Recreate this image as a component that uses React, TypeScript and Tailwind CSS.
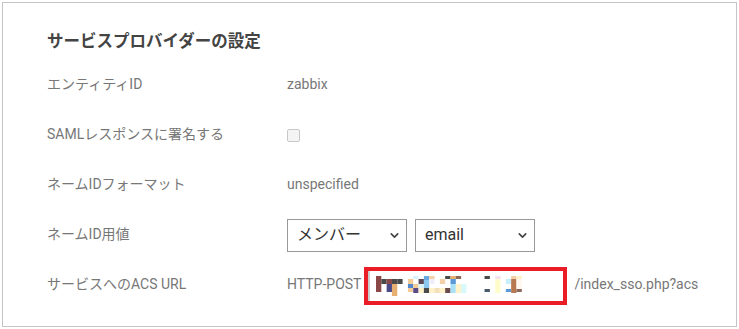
import { ChevronDown } from "lucide-react"

const font = { fontFamily: "Roboto, 'Noto Sans CJK JP', sans-serif" }

// pixelated (blurred) URL cells: [x, y, w, h, color]
const mosaic: [number, number, number, number, string][] = [
    [0, 0, 5, 16, "#8b4848"],
    [5, 3, 5, 5, "#4a4a4a"],
    [10, 3, 5, 5, "#8b4848"],
    [10, 8, 5, 8, "#4a4a88"],
    [15, 3, 5, 5, "#4a4a4a"],
    [15, 8, 5, 12, "#e8b070"],
    [20, 3, 5, 5, "#4a4a4a"],
    [30, 3, 5, 5, "#f4cc98"],
    [30, 8, 5, 4, "#5588cc"],
    [30, 12, 5, 4, "#f4cc98"],
    [35, 0, 5, 3, "#d8f4fa"],
    [35, 8, 5, 4, "#f4cc98"],
    [35, 12, 5, 5, "#5a4a88"],
    [40, 3, 5, 5, "#5a4a5a"],
    [40, 8, 5, 4, "#d8f4fa"],
    [40, 12, 5, 5, "#fff2c8"],
    [45, 0, 5, 4, "#6aa8e0"],
    [45, 4, 5, 8, "#8ac8f0"],
    [45, 12, 5, 5, "#4a4a4a"],
    [50, 0, 5, 3, "#f4d0a8"],
    [50, 3, 5, 5, "#f0eef8"],
    [50, 12, 5, 5, "#fff2c8"],
    [55, 12, 5, 5, "#f4e0b8"],
    [60, 3, 5, 5, "#f4d0a8"],
    [60, 12, 5, 5, "#fff2c8"],
    [65, 0, 5, 3, "#4a4a4a"],
    [65, 12, 5, 5, "#6a4a4a"],
    [70, 0, 5, 3, "#e8b070"],
    [70, 3, 5, 5, "#5a98d8"],
    [70, 8, 5, 9, "#a8e0f8"],
    [75, 0, 5, 3, "#8b6a5a"],
    [75, 8, 5, 9, "#fff2c8"],
    [80, 8, 5, 9, "#d8f8fa"],
    [102, 0, 5, 3, "#4a4a4a"],
    [102, 13, 5, 3, "#4a5a6a"],
    [112, 0, 5, 3, "#f4e0f0"],
    [112, 3, 5, 14, "#fffccc"],
    [122, 3, 5, 5, "#c8f0fa"],
    [122, 13, 5, 3, "#5a98d8"],
    [127, 0, 5, 3, "#f4d0a8"],
    [127, 3, 5, 14, "#b87850"],
    [132, 0, 5, 3, "#fff2c8"],
    [132, 3, 5, 10, "#fff8f0"],
    [132, 13, 5, 3, "#8b6a5a"],
]

function Row({ label, children }: { label: string; children: React.ReactNode }) {
    return (
        <div className="flex items-center h-[50px]">
            <div className="w-[240px] text-[14px] text-[#777]">{label}</div>
            <div className="flex items-center text-[14px] text-[#777]">{children}</div>
        </div>
    )
}

function Select({ value, options }: { value: string; options: string[] }) {
    return (
        <div className="relative w-[120px] h-[33px]">
            <select
                defaultValue={value}
                className="appearance-none w-full h-full border border-[#999] bg-white text-[16px] text-[#333] pl-[9px] outline-none"
                style={font}
            >
                {options.map((o) => (
                    <option key={o}>{o}</option>
                ))}
            </select>
            <ChevronDown
                size={13}
                strokeWidth={3}
                className="absolute right-[6px] top-[10px] text-[#444] pointer-events-none"
            />
        </div>
    )
}

export default function App() {
    return (
        <div className="bg-white w-[739px] h-[329px] p-[2px]" style={font}>
            <div className="border border-[#c4c4c4] h-full pl-[44px] pt-[27px]">
                <h2 className="text-[16.5px] font-bold text-[#444] leading-[24px] mb-[5px]">
                    サービスプロバイダーの設定
                </h2>

                <Row label="エンティティID">zabbix</Row>

                <Row label="SAMLレスポンスに署名する">
                    <span className="block w-[13px] h-[13px] mt-[2px] border border-[#c8c8c8] rounded-[2px] bg-[#f4f4f4]"></span>
                </Row>

                <Row label="ネームIDフォーマット">unspecified</Row>

                <Row label="ネームID用値">
                    <div className="flex gap-[8px] mt-[2px]">
                        <Select value="メンバー" options={["メンバー", "グループ"]} />
                        <Select value="email" options={["email", "name"]} />
                    </div>
                </Row>

                <Row label="サービスへのACS URL">
                    <span>HTTP-POST</span>
                    <div className="ml-[3px] mt-[4px] w-[203px] h-[38px] border-[4px] border-[#ea1c26] bg-white flex items-center">
                        <div className="h-full w-full border-l-[2px] border-[#ccc] pl-[6px] flex items-center">
                            <svg width="149" height="20" viewBox="0 0 140 20" preserveAspectRatio="none">
                                {mosaic.map(([x, y, w, h, c], i) => (
                                    <rect key={i} x={x} y={y} width={w} height={h} fill={c} />
                                ))}
                            </svg>
                        </div>
                    </div>
                    <span className="ml-[7px]">/index_sso.php?acs</span>
                </Row>
            </div>
        </div>
    )
}
